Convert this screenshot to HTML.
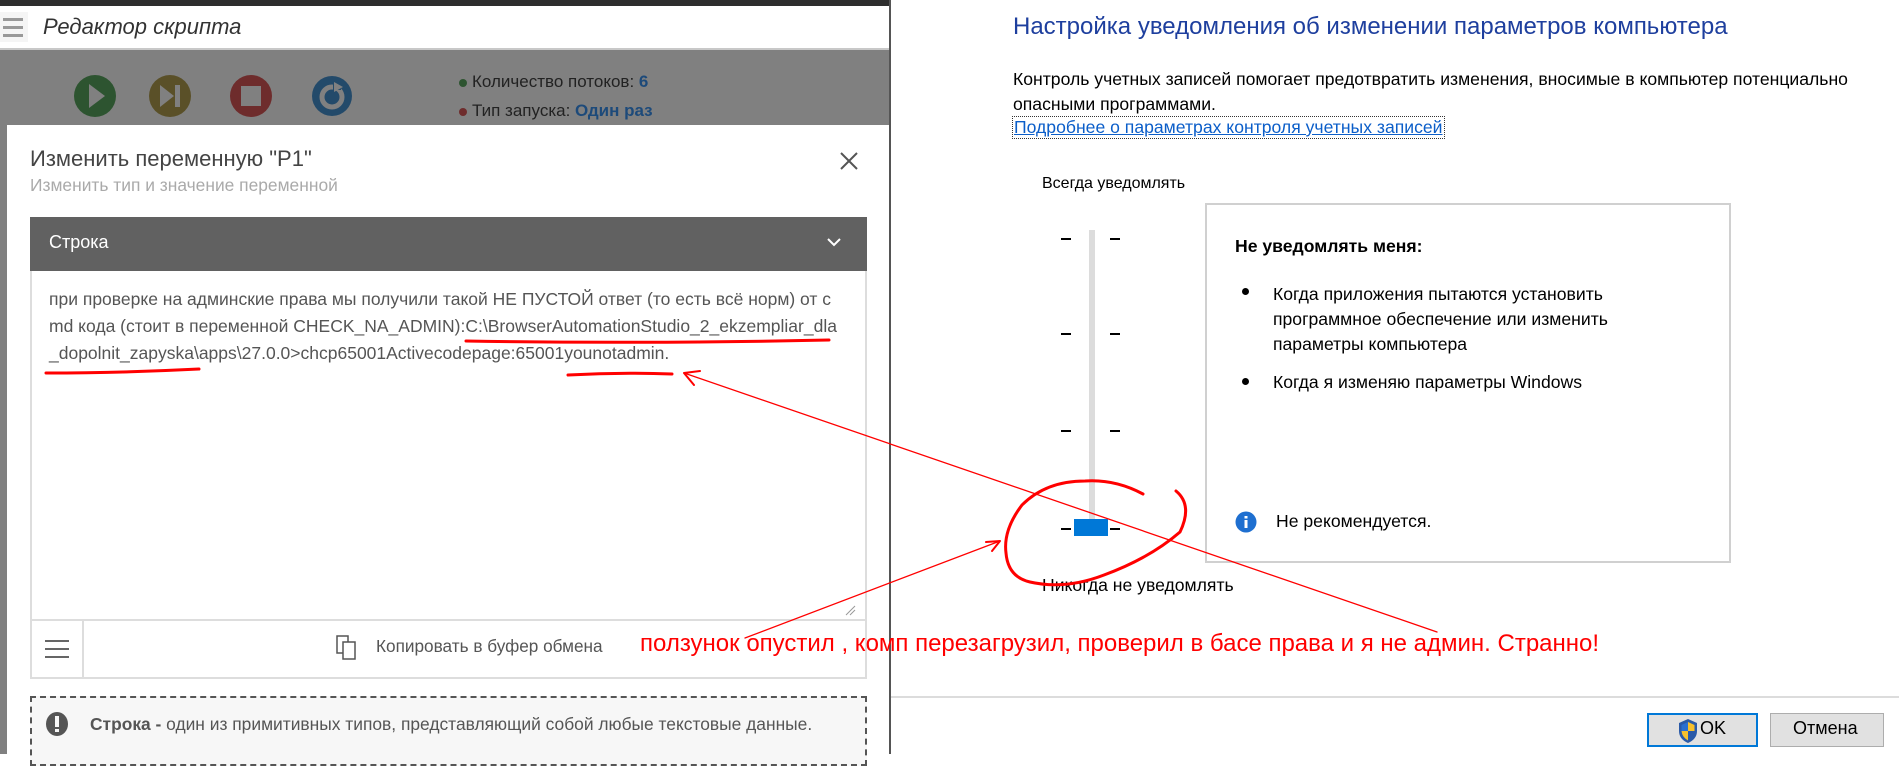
<!DOCTYPE html>
<html><head><meta charset="utf-8"><style>
*{margin:0;padding:0;box-sizing:border-box}
body{width:1899px;height:754px;position:relative;overflow:hidden;background:#fff;font-family:"Liberation Sans",sans-serif}
.a{position:absolute;white-space:nowrap}
</style></head><body>
<!-- left app -->
<div class="a" style="left:0;top:0;width:890px;height:754px;background:#808080"></div>
<div class="a" style="left:0;top:0;width:890px;height:6px;background:#2e2e2e"></div>
<div class="a" style="left:0;top:6px;width:890px;height:44px;background:#fff;border-bottom:2px solid #c8c8c8"></div>
<div class="a" style="left:0;top:12px;width:28px;height:30px;background:#f5f5f5"></div>
<div class="a" style="left:3px;top:18px;width:20px;height:3px;background:#999;box-shadow:0 8px 0 #999,0 16px 0 #999"></div>
<div class="a" style="left:43px;top:14px;font-size:22px;font-style:italic;color:#333">Редактор скрипта</div>
<svg class="a" style="left:0;top:0" width="890" height="130">
<circle cx="95" cy="96" r="21" fill="#2d5430"/><path d="M89 84 L105 96 L89 108 Z" fill="#808080"/>
<circle cx="170" cy="96" r="21" fill="#5a5028"/><path d="M160 85 L174 96 L160 107 Z" fill="#808080"/><rect x="175" y="85" width="5" height="22" fill="#808080"/>
<circle cx="251" cy="96" r="21" fill="#6e2c2c"/><rect x="241" y="86" width="20" height="20" fill="#808080"/>
<circle cx="332" cy="96" r="20" fill="#234a6a"/><circle cx="332" cy="97" r="10" fill="none" stroke="#808080" stroke-width="5"/><rect x="333" y="82" width="8" height="8" fill="#234a6a"/><path d="M334 82 L343 87 L334 92 Z" fill="#808080"/>
<circle cx="463" cy="83" r="4" fill="#2d5430"/><circle cx="463" cy="112" r="4" fill="#6e2c2c"/>
</svg>
<div class="a" style="left:472px;top:72px;font-size:17px;color:#222">Количество потоков: <b style="color:#1d4a7a">6</b></div>
<div class="a" style="left:472px;top:101px;font-size:17px;color:#222">Тип запуска: <b style="color:#1d4a7a">Один раз</b></div>
<!-- modal -->
<div class="a" style="left:7px;top:125px;width:882px;height:629px;background:#fff"></div>
<div class="a" style="left:30px;top:146px;font-size:22px;color:#444">Изменить переменную "P1"</div>
<div class="a" style="left:30px;top:175px;font-size:17.4px;color:#aaa">Изменить тип и значение переменной</div>
<svg class="a" style="left:838px;top:150px" width="22" height="22"><path d="M3 3 L19 19 M19 3 L3 19" stroke="#555" stroke-width="2"/></svg>
<div class="a" style="left:30px;top:217px;width:837px;height:54px;background:#616161"></div>
<div class="a" style="left:49px;top:232px;font-size:18px;color:#fff">Строка</div>
<svg class="a" style="left:827px;top:238px" width="14" height="10"><path d="M1 1 L7 7 L13 1" stroke="#fff" stroke-width="2" fill="none"/></svg>
<div class="a" style="left:30px;top:271px;width:837px;height:350px;border:2px solid #ddd;border-top:none"></div>
<div class="a" style="left:49px;top:286px;font-size:17.5px;color:#555;line-height:27px;white-space:normal;width:820px">при проверке на админские права мы получили такой НЕ ПУСТОЙ ответ (то есть всё норм) от c<br>md кода (стоит в переменной CHECK_NA_ADMIN):C:\BrowserAutomationStudio_2_ekzempliar_dla<br>_dopolnit_zapyska\apps\27.0.0&gt;chcp65001Activecodepage:65001younotadmin.</div>
<svg class="a" style="left:844px;top:604px" width="12" height="12"><path d="M2 11 L11 2 M6 11 L11 6" stroke="#999"/></svg>
<div class="a" style="left:30px;top:619px;width:837px;height:60px;border:2px solid #ddd"></div>
<div class="a" style="left:82px;top:621px;width:2px;height:56px;background:#ddd"></div>
<div class="a" style="left:45px;top:640px;width:24px;height:2px;background:#666;box-shadow:0 8px 0 #666,0 16px 0 #666"></div>
<svg class="a" style="left:336px;top:635px" width="22" height="26"><rect x="1" y="1" width="11" height="17" fill="#fff" stroke="#555" stroke-width="1.5"/><rect x="7" y="7" width="12" height="17" fill="#fff" stroke="#555" stroke-width="1.5"/></svg>
<div class="a" style="left:376px;top:636px;font-size:17.2px;color:#555">Копировать в буфер обмена</div>
<div class="a" style="left:30px;top:696px;width:837px;height:70px;background:#f7f7f7;border:2px dashed #555"></div>
<svg class="a" style="left:45px;top:711px" width="24" height="26"><ellipse cx="12" cy="13" rx="11" ry="12" fill="#555"/><rect x="10" y="5" width="4" height="11" fill="#f7f7f7"/><rect x="10" y="18" width="4" height="3" fill="#f7f7f7"/></svg>
<div class="a" style="left:90px;top:714px;font-size:17.4px;color:#555"><b>Строка -</b> один из примитивных типов, представляющий собой любые текстовые данные.</div>
<!-- right panel -->
<div class="a" style="left:889px;top:0;width:2px;height:754px;background:#555"></div>
<div class="a" style="left:1013px;top:13px;font-size:24px;color:#1e3f9e">Настройка уведомления об изменении параметров компьютера</div>
<div class="a" style="left:1013px;top:67px;font-size:17.6px;color:#000;line-height:25px">Контроль учетных записей помогает предотвратить изменения, вносимые в компьютер потенциально<br>опасными программами.</div>
<div class="a" style="left:1012px;top:116px;font-size:17.6px;color:#0b5ec9;text-decoration:underline;border:1px dotted #333;padding:0 1px">Подробнее о параметрах контроля учетных записей</div>
<div class="a" style="left:1042px;top:175px;font-size:16px;color:#000">Всегда уведомлять</div>
<div class="a" style="left:1089px;top:230px;width:6px;height:304px;background:#dcdcdc"></div>
<svg class="a" style="left:1055px;top:230px" width="75" height="310">
<g stroke="#000" stroke-width="2"><path d="M6 9h10M55 9h10M6 104h10M55 104h10M6 201h10M55 201h10M6 299h10M55 299h10"/></g>
<rect x="19" y="289" width="34" height="17" fill="#0078d7"/>
</svg>
<div class="a" style="left:1042px;top:575px;font-size:17.6px;color:#000">Никогда не уведомлять</div>
<div class="a" style="left:1205px;top:203px;width:526px;height:360px;border:2px solid #d0d0d0"></div>
<div class="a" style="left:1235px;top:236px;font-size:17.6px;font-weight:bold;color:#000">Не уведомлять меня:</div>
<div class="a" style="left:1242px;top:288px;width:7px;height:7px;border-radius:50%;background:#000"></div>
<div class="a" style="left:1242px;top:378px;width:7px;height:7px;border-radius:50%;background:#000"></div>
<div class="a" style="left:1273px;top:282px;font-size:17.6px;color:#000;line-height:25px">Когда приложения пытаются установить<br>программное обеспечение или изменить<br>параметры компьютера</div>
<div class="a" style="left:1273px;top:372px;font-size:17.6px;color:#000">Когда я изменяю параметры Windows</div>
<svg class="a" style="left:1235px;top:511px" width="22" height="22"><circle cx="11" cy="11" r="10.5" fill="#1e6fd0"/><rect x="9.5" y="9" width="3" height="8" fill="#fff"/><rect x="9.5" y="5" width="3" height="2.5" fill="#fff"/></svg>
<div class="a" style="left:1276px;top:511px;font-size:17.6px;color:#000">Не рекомендуется.</div>
<div class="a" style="left:891px;top:696px;width:1008px;height:2px;background:#dcdcdc"></div>
<div class="a" style="left:1647px;top:713px;width:111px;height:34px;background:#e1e1e1;border:2px solid #0078d7"></div>
<svg class="a" style="left:1677px;top:718px" width="22" height="26"><path d="M11 1 L20 5 L20 13 Q20 21 11 25 Q2 21 2 13 L2 5 Z" fill="#2a5aa8"/><path d="M11 4 L17.5 7 V13 H11 Z" fill="#f7c02c"/><path d="M11 13 H4.5 Q5 19 11 22.5 Z" fill="#f7c02c"/><path d="M11 4 V13 H4.5 V7 Z" fill="#2a6fd0"/></svg>
<div class="a" style="left:1700px;top:718px;font-size:18px;color:#000">OK</div>
<div class="a" style="left:1770px;top:713px;width:114px;height:34px;background:#e1e1e1;border:1px solid #adadad"></div>
<div class="a" style="left:1793px;top:718px;font-size:18px;color:#000">Отмена</div>
<!-- annotations -->
<div class="a" style="left:640px;top:630px;font-size:24px;color:#f00">ползунок опустил , комп перезагрузил, проверил в басе права и я не админ. Странно!</div>
<svg class="a" style="left:0;top:0" width="1899" height="754" fill="none">
<g stroke="#f00" stroke-linecap="round">
<path d="M466 341 Q640 344 829 340" stroke-width="3"/>
<path d="M46 373 Q120 373 199 369" stroke-width="3"/>
<path d="M568 375 Q620 372 672 374" stroke-width="3"/>
<path d="M1437 632 L684 373" stroke-width="1.3"/>
<path d="M684 373 L700 371 M684 373 L694 385" stroke-width="2"/>
<path d="M745 638 L1000 541" stroke-width="1.3"/>
<path d="M1000 541 L986 542 M1000 541 L992 551" stroke-width="2"/>
<path d="M1143 494 Q1115 479 1085 481 Q1046 481 1022 505 Q1003 530 1006 553 Q1008 577 1030 582 Q1065 590 1104 575 Q1150 558 1180 532 Q1193 505 1176 491" stroke-width="3"/>
</g></svg>
</body></html>
